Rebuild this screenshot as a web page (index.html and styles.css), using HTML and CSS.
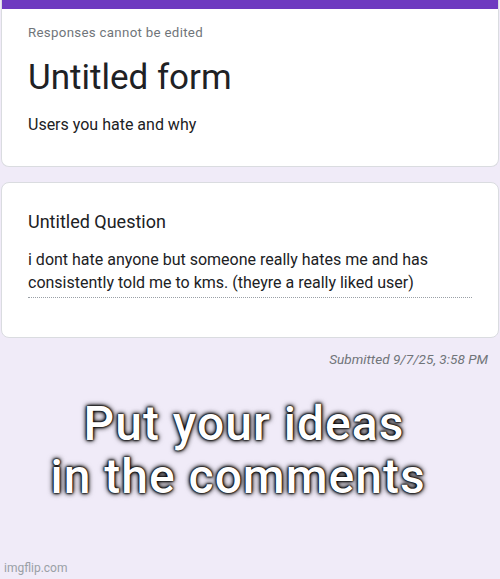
FILE: index.html
```html
<!DOCTYPE html>
<html>
<head>
<meta charset="utf-8">
<link rel="stylesheet" href="styles.css">
</head>
<body>
<div class="page">
  <div class="card header-card">
    <div class="bar"></div>
    <div class="card-body">
      <div class="note">Responses cannot be edited</div>
      <h1 class="title">Untitled form</h1>
      <div class="desc">Users you hate and why</div>
    </div>
  </div>
  <div class="card question-card">
    <div class="q-title">Untitled Question</div>
    <div class="answer">i dont hate anyone but someone really hates me and has consistently told me to kms. (theyre a really liked user)</div>
  </div>
  <div class="submitted">Submitted 9/7/25, 3:58 PM</div>
  <div class="meme"><span class="meme-line first">Put your ideas</span><span class="meme-line">in the comments</span></div>
  <div class="watermark">imgflip.com</div>
</div>
</body>
</html>
```

FILE: styles.css
```css
html, body {
  margin: 0;
  padding: 0;
}
body {
  background: #f0ebf8;
  font-family: Roboto, "Liberation Sans", Arial, sans-serif;
  color: #202124;
  width: 500px;
  height: 579px;
  overflow: hidden;
}
.page {
  display: flex;
  flex-direction: column;
  height: 579px;
}
.card {
  background: #fff;
  margin: 0 1px;
  border: 1px solid #dadce0;
  border-radius: 8px;
  box-sizing: border-box;
}
.header-card {
  height: 167px;
  border-top: none;
  border-radius: 0 0 8px 8px;
  overflow: hidden;
}
.bar {
  height: 9px;
  background: #6e3ac0;
}
.card-body {
  padding: 15px 26px 0;
}
.note {
  font-size: 13.3px;
  letter-spacing: 0.3px;
  color: #70757a;
  line-height: 18px;
}
.title {
  margin: 14px 0 0;
  font-weight: 400;
  font-size: 35px;
  line-height: 44px;
}
.desc {
  margin-top: 14px;
  font-size: 16px;
  line-height: 22px;
}
.question-card {
  margin-top: 15px;
  height: 156px;
  padding: 27px 26px 0;
}
.q-title {
  font-size: 18px;
  line-height: 24px;
}
.answer {
  margin-top: 14px;
  width: 444px;
  font-size: 16px;
  line-height: 23px;
  padding-bottom: 3px;
  border-bottom: 1px dotted #9aa0a6;
}
.submitted {
  margin-top: 12px;
  padding-right: 12px;
  text-align: right;
  font-style: italic;
  font-size: 13.6px;
  line-height: 18px;
  color: #70757a;
}
.meme {
  margin-top: 29px;
  padding-right: 24px;
  display: flex;
  flex-direction: column;
  align-items: center;
  color: #fff;
  font-size: 48px;
  line-height: 53px;
  font-weight: 500;
  letter-spacing: 1px;
  text-shadow: 0 0 1px #000, 0 0 2px #000, 0 0 3px #000, 0 0 5px #000, 0 0 6px rgba(0,0,0,0.6);
}
.meme-line.first {
  padding-left: 12px;
}
.watermark {
  margin-top: auto;
  padding: 0 0 3px 4px;
  font-size: 12px;
  line-height: 15px;
  color: #9aa0a6;
}
```
